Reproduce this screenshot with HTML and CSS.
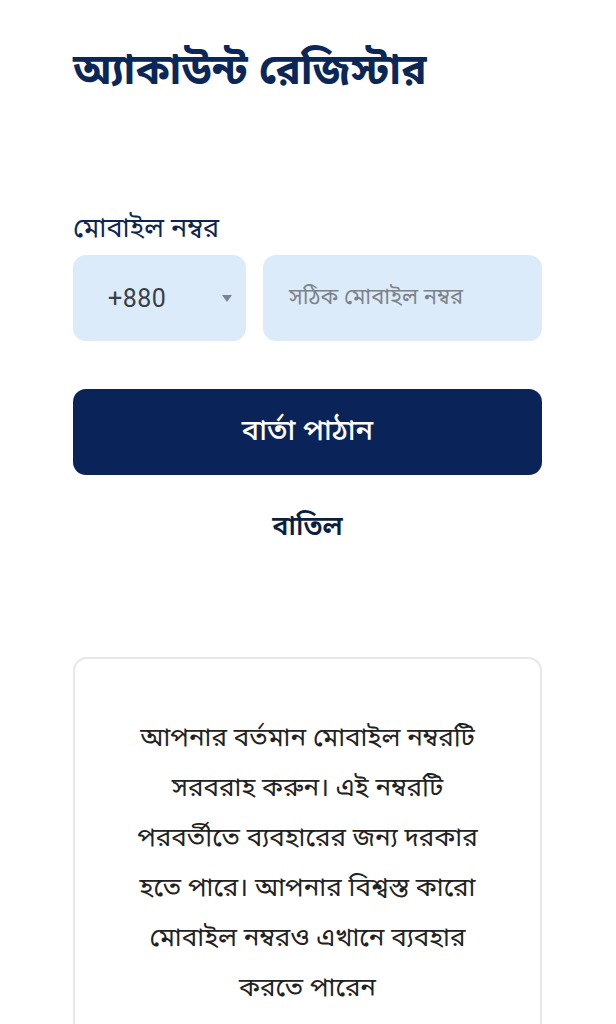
FILE: index.html
```html
<!DOCTYPE html>
<html lang="bn">
<head>
<meta charset="utf-8">
<meta name="viewport" content="width=device-width, initial-scale=1">
<title>অ্যাকাউন্ট রেজিস্টার</title>
<link rel="stylesheet" href="styles.css">
</head>
<body>
<main class="page">
  <h1 class="title">অ্যাকাউন্ট রেজিস্টার</h1>

  <section class="form">
    <label class="label" for="phone">মোবাইল নম্বর</label>
    <div class="phone-row">
      <div class="country">
        <span class="code">+880</span>
        <svg class="caret" width="10" height="7" viewBox="0 0 10 7"><path d="M0 0h10L5 7z" fill="#7d8590"/></svg>
      </div>
      <div class="number">
        <span class="placeholder" id="phone">সঠিক মোবাইল নম্বর</span>
      </div>
    </div>

    <button class="primary" type="button">বার্তা পাঠান</button>
    <button class="cancel" type="button">বাতিল</button>
  </section>

  <section class="info">
    <p>আপনার বর্তমান মোবাইল নম্বরটি<br>সরবরাহ করুন। এই নম্বরটি<br>পরবর্তীতে ব্যবহারের জন্য দরকার<br>হতে পারে। আপনার বিশ্বস্ত কারো<br>মোবাইল নম্বরও এখানে ব্যবহার<br>করতে পারেন</p>
  </section>
</main>
</body>
</html>
```

FILE: styles.css
```css
* { box-sizing: border-box; }

html, body {
  margin: 0;
  padding: 0;
  background: #ffffff;
}

body {
  font-family: "Noto Sans Bengali", "Noto Serif Bengali", "Lohit Bengali", "FreeSerif", "Noto Sans", sans-serif;
  color: #0d2550;
}

.page {
  width: 616px;
  padding: 38px 74px 0 73px;
  display: flex;
  flex-direction: column;
}

.title {
  margin: 0;
  font-size: 42px;
  font-weight: 700;
  line-height: 70px;
  color: #0b2757;
}

.form {
  display: flex;
  flex-direction: column;
  margin-top: 100px;
}

.label {
  font-size: 27px;
  line-height: 36px;
  color: #0d2550;
  padding-top: 4px;
  margin-bottom: 7px;
}

.phone-row {
  display: flex;
  gap: 17px;
  height: 86px;
}

.country {
  width: 173px;
  background: #dcebfa;
  border-radius: 13px;
  display: flex;
  align-items: center;
  justify-content: space-between;
  padding: 0 14px 0 35px;
}

.code {
  font-family: Roboto, "Liberation Sans", sans-serif;
  font-size: 25px;
  letter-spacing: 0.5px;
  color: #3a3f47;
}

.number {
  flex: 1;
  background: #dcebfa;
  border-radius: 13px;
  display: flex;
  align-items: center;
  padding: 0 26px;
}

.placeholder {
  font-size: 22px;
  color: #7c828a;
}

.primary {
  margin-top: 48px;
  height: 86px;
  border: 0;
  border-radius: 13px;
  background: #0a2459;
  color: #ffffff;
  font-family: inherit;
  font-size: 29px;
  font-weight: 500;
  cursor: pointer;
}

.cancel {
  margin-top: 33px;
  align-self: center;
  background: none;
  border: 0;
  padding: 0;
  font-family: inherit;
  font-size: 27px;
  font-weight: 600;
  color: #0d1f3f;
  line-height: 40px;
}

.info {
  margin-top: 109px;
  border: 2px solid #e6e7ea;
  border-bottom: 0;
  border-radius: 14px 14px 0 0;
  padding: 56px 20px 30px;
  min-height: 400px;
}

.info p {
  margin: 0;
  text-align: center;
  font-size: 26px;
  line-height: 50px;
  color: #222222;
}
```
